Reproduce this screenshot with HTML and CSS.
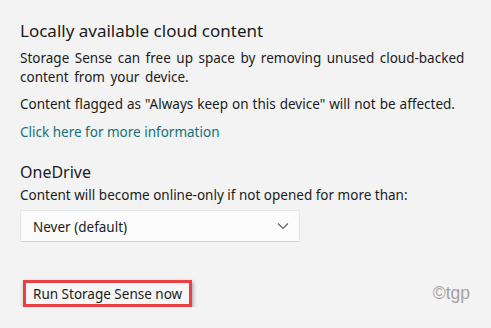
FILE: index.html
```html
<!DOCTYPE html>
<html lang="en">
<head>
  <meta charset="UTF-8" />
  <title>Storage Sense</title>
  <link rel="stylesheet" href="styles.css">
</head>
<body>
  <div class="settings">
    <h2 class="section-title">Locally available cloud content</h2>
    <p class="para para-wide">Storage Sense can free up space by removing unused cloud-backed content from your device.</p>
    <p class="para">Content flagged as "Always keep on this device" will not be affected.</p>
    <a class="link" href="#">Click here for more information</a>

    <h3 class="sub-title">OneDrive</h3>
    <p class="desc">Content will become online-only if not opened for more than:</p>
    <div class="dropdown">
      <span>Never (default)</span>
      <svg class="chevron" width="12" height="8" viewBox="0 0 12 8">
        <path d="M1 1.5 L6 6.5 L11 1.5" fill="none" stroke="#5c5c5c" stroke-width="1.1" />
      </svg>
    </div>

    <div class="bottom-row">
      <button class="run-btn">Run Storage Sense now</button>
      <span class="watermark">©tgp</span>
    </div>
  </div>
</body>
</html>
```

FILE: styles.css
```css
body {
  margin: 0;
  background: #f3f3f3;
  font-family: "Noto Sans", sans-serif;
  color: #1b1b1b;
}

.settings {
  padding: 18px 21px 0 20px;
}

.section-title {
  margin: 0;
  font-size: 17px;
  line-height: 26px;
  font-weight: 400;
}

.para {
  margin: 5px 0 0;
  font-size: 13.5px;
  line-height: 19px;
  word-spacing: 0.5px;
}

.para-wide {
  word-spacing: 2px;
}

.para + .para {
  margin-top: 8px;
}

.link {
  display: block;
  margin-top: 9px;
  font-size: 13.5px;
  line-height: 19px;
  color: #13707a;
  text-decoration: none;
}

.sub-title {
  margin: 19px 0 0;
  font-size: 16px;
  line-height: 22px;
  font-weight: 400;
}

.desc {
  margin: 3px 0 0;
  font-size: 13.5px;
  line-height: 19px;
}

.dropdown {
  margin-top: 5px;
  width: 256px;
  height: 30px;
  padding: 0 10px 0 12px;
  display: flex;
  align-items: center;
  justify-content: space-between;
  background: #fbfbfb;
  border: 1px solid #e5e5e5;
  border-bottom-color: #d0d0d0;
  border-radius: 2px;
  font-size: 13.5px;
}

.dropdown span {
  padding-top: 1px;
}

.bottom-row {
  margin-top: 38px;
  display: flex;
  align-items: center;
  justify-content: space-between;
}

.run-btn {
  margin-left: 3px;
  height: 27px;
  padding: 0 7px;
  background: #f6f6f6;
  border: 3px solid #ec3f41;
  box-shadow: 1px 2px 4px rgba(0, 0, 0, 0.35);
  font-family: "Noto Sans", sans-serif;
  font-size: 13.5px;
  color: #1b1b1b;
}

.watermark {
  font-family: "Liberation Sans", Arial, sans-serif;
  font-size: 17.5px;
  color: #a3a3a3;
}
```
